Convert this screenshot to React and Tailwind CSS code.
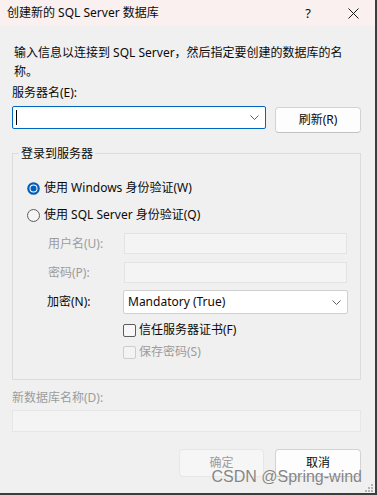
import React from 'react';

const Chevron = () => (
  <svg width="9" height="5" viewBox="0 0 9 5">
    <path d="M0.5 0.5 L4.5 4.5 L8.5 0.5" fill="none" stroke="#606060" strokeWidth="1" />
  </svg>
);

const RadioOn = () => (
  <svg width="13" height="13" viewBox="0 0 13 13">
    <circle cx="6.5" cy="6.5" r="6.3" fill="#005fb8" />
    <circle cx="6.5" cy="6.5" r="4" fill="#ffffff" />
    <circle cx="6.5" cy="6.5" r="3" fill="#005fb8" />
  </svg>
);

const RadioOff = () => (
  <svg width="13" height="13" viewBox="0 0 13 13">
    <circle cx="6.5" cy="6.5" r="6" fill="#f5f5f5" stroke="#5c5c5c" strokeWidth="1" />
  </svg>
);

const Grip = () => (
  <svg width="8" height="8" viewBox="0 0 8 8" fill="#b5b5b5">
    <rect x="6" y="0" width="2" height="2" />
    <rect x="3" y="3" width="2" height="2" />
    <rect x="6" y="3" width="2" height="2" />
    <rect x="0" y="6" width="2" height="2" />
    <rect x="3" y="6" width="2" height="2" />
    <rect x="6" y="6" width="2" height="2" />
  </svg>
);

export default function App() {
  return (
    <div className="h-[495px] w-[377px] bg-[#3d3d3d] font-['Noto_Sans','Noto_Sans_CJK_SC',sans-serif] text-[12px] text-[#0a0a0a]">
      <div className="relative flex h-[493px] w-[375px] flex-col bg-[#f0f0f0]">
        {/* title bar */}
        <div className="flex h-[26px] shrink-0 items-center bg-[#f9f0ef]">
          <span className="flex-1 pl-[7px] leading-[16px]">创建新的 SQL Server 数据库</span>
          <span className="flex w-[46px] justify-center text-[13px] leading-[16px]">?</span>
          <span className="flex w-[44px] justify-center">
            <svg width="11" height="11" viewBox="0 0 11 11">
              <path d="M0.5 0.5 L10.5 10.5 M10.5 0.5 L0.5 10.5" stroke="#1a1a1a" strokeWidth="1" />
            </svg>
          </span>
        </div>

        <div className="flex flex-col pl-[12px] pr-[14px] pt-[17px]">
          <p className="pl-[2px] leading-[19px]">
            输入信息以连接到 SQL Server，然后指定要创建的数据库的名
            <br />
            称。
          </p>

          <label className="mt-[4px] leading-[16px]">服务器名(E):</label>
          <div className="mt-[5px] flex items-start">
            <div className="flex h-[23px] w-[254px] items-center justify-between rounded-[2px] border border-[#0067c0] bg-white pl-[3px] pr-[6px]">
              <span className="h-[15px] w-[1px] bg-black" />
              <Chevron />
            </div>
            <button className="ml-[9px] mt-[1px] h-[26px] w-[86px] rounded-[4px] border border-[#d3d3d3] border-b-[#c2c2c2] bg-[#fdfdfd] leading-[16px]">
              刷新(R)
            </button>
          </div>

          {/* group box */}
          <div className="relative mt-[20px] border border-[#dcdcdc] pb-[18px] pl-[14px] pt-[25px]">
            <span className="absolute -top-[8px] left-[6px] bg-[#f0f0f0] px-[2px] leading-[16px]">登录到服务器</span>

            <div className="flex h-[18px] items-center gap-[4px]">
              <RadioOn />
              <span className="leading-[18px]">使用 Windows 身份验证(W)</span>
            </div>
            <div className="mt-[9px] flex h-[18px] items-center gap-[4px]">
              <RadioOff />
              <span className="leading-[18px]">使用 SQL Server 身份验证(Q)</span>
            </div>

            <div className="mt-[9px] grid grid-cols-[76px_223px] items-center pl-[21px]">
              <span className="leading-[16px] text-[#9c9c9c]">用户名(U):</span>
              <div className="h-[21px] border border-[#e3e3e3] bg-[#f4f4f4]" />
            </div>
            <div className="mt-[8px] grid grid-cols-[76px_223px] items-center pl-[21px]">
              <span className="leading-[16px] text-[#9c9c9c]">密码(P):</span>
              <div className="h-[21px] border border-[#e3e3e3] bg-[#f4f4f4]" />
            </div>
            <div className="mt-[7px] grid grid-cols-[76px_223px] items-center pl-[20px]">
              <span className="leading-[16px]">加密(N):</span>
              <div className="flex h-[24px] w-[225px] items-center justify-between rounded-[2px] border border-[#d0d0d0] bg-white pl-[4px] pr-[6px]">
                <span className="leading-[16px]">Mandatory (True)</span>
                <Chevron />
              </div>
            </div>

            <div className="mt-[7px] flex h-[18px] items-center gap-[3px] pl-[96px]">
              <span className="h-[13px] w-[13px] rounded-[2px] border border-[#5c5c5c] bg-[#f7f7f7]" />
              <span className="leading-[18px]">信任服务器证书(F)</span>
            </div>
            <div className="mt-[4px] flex h-[18px] items-center gap-[3px] pl-[96px]">
              <span className="h-[13px] w-[13px] rounded-[2px] border border-[#cdcdcd] bg-[#f3f3f3]" />
              <span className="leading-[18px] text-[#9c9c9c]">保存密码(S)</span>
            </div>
          </div>

          <label className="mt-[10px] leading-[16px] text-[#9c9c9c]">新数据库名称(D):</label>
          <div className="mt-[4px] h-[22px] border border-[#e6e6e6] bg-[#f4f4f4]" />

          <div className="mt-[17px] flex justify-end gap-[11px]">
            <button className="h-[28px] w-[85px] rounded-[4px] border border-[#e6e6e6] bg-[#f6f6f6] leading-[16px] text-[#9c9c9c]">
              确定
            </button>
            <button className="h-[28px] w-[86px] rounded-[4px] border border-[#d3d3d3] border-b-[#c2c2c2] bg-[#fdfdfd] leading-[16px]">
              取消
            </button>
          </div>
        </div>

        {/* watermark over the buttons, as in the screenshot */}
        <span className="absolute bottom-[7px] right-[13px] font-['Liberation_Sans',Arial,sans-serif] text-[16px] leading-[18px] text-[#858585] [text-shadow:0_0_1px_#ffffff]">
          CSDN @Spring-wind
        </span>
        <span className="absolute bottom-[1px] right-[2px] flex">
          <Grip />
        </span>
      </div>
    </div>
  );
}
